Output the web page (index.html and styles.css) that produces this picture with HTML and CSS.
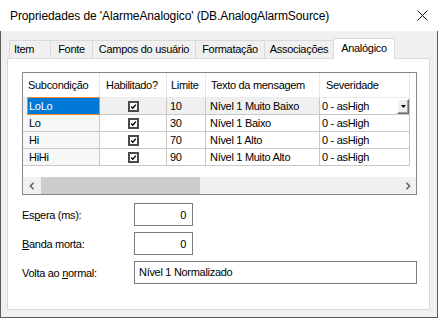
FILE: index.html
```html
<!DOCTYPE html>
<html lang="pt">
<head>
    <meta charset="UTF-8">
    <title>Propriedades de 'AlarmeAnalogico'</title>
    <link rel="stylesheet" href="styles.css">
</head>
<body>
    <div class="window">
        <div class="titlebar">
            <span class="title">Propriedades de 'AlarmeAnalogico' (DB.AnalogAlarmSource)</span>
            <svg class="close" width="11" height="11" viewBox="0 0 11 11"><path d="M0.5 0.5 L10.5 10.5 M10.5 0.5 L0.5 10.5" stroke="#111" stroke-width="1" fill="none"/></svg>
        </div>
        <div class="client">
            <div class="tabs">
                <div class="tab tab-item">Item</div>
                <div class="tab tab-fonte">Fonte</div>
                <div class="tab tab-campos">Campos do usuário</div>
                <div class="tab tab-format">Formatação</div>
                <div class="tab tab-assoc">Associações</div>
                <div class="tab tab-active">Analógico</div>
            </div>
            <div class="panel">
                <div class="grid">
                    <div class="rows">
                        <div class="row head">
                            <div class="cell c1">Subcondição</div>
                            <div class="cell c2">Habilitado?</div>
                            <div class="cell c3">Limite</div>
                            <div class="cell c4">Texto da mensagem</div>
                            <div class="cell c5">Severidade</div>
                            <div class="cell filler"></div>
                        </div>
                        <div class="row current">
                            <div class="cell c1 selcell"><div class="selbox">LoLo</div></div>
                            <div class="cell c2"><svg class="check" width="11" height="11" viewBox="0 0 11 11"><rect x="1" y="1" width="9" height="9" fill="#fff" stroke="#4a4a4a" stroke-width="2"/><path d="M3.2 5.6 L4.8 7.2 L7.9 3.6" stroke="#000" stroke-width="1.4" fill="none"/></svg></div>
                            <div class="cell c3">10</div>
                            <div class="cell c4">Nível 1 Muito Baixo</div>
                            <div class="cell c5 editing">
                                <span>0 - asHigh</span>
                                <span class="dropbtn"><svg width="5" height="3" viewBox="0 0 5 3"><path d="M0 0 H5 L2.5 3 Z" fill="#000"/></svg></span>
                            </div>
                            <div class="cell filler"></div>
                        </div>
                        <div class="row">
                            <div class="cell c1">Lo</div>
                            <div class="cell c2"><svg class="check" width="11" height="11" viewBox="0 0 11 11"><rect x="1" y="1" width="9" height="9" fill="#fff" stroke="#4a4a4a" stroke-width="2"/><path d="M3.2 5.6 L4.8 7.2 L7.9 3.6" stroke="#000" stroke-width="1.4" fill="none"/></svg></div>
                            <div class="cell c3">30</div>
                            <div class="cell c4">Nível 1 Baixo</div>
                            <div class="cell c5">0 - asHigh</div>
                            <div class="cell filler"></div>
                        </div>
                        <div class="row">
                            <div class="cell c1">Hi</div>
                            <div class="cell c2"><svg class="check" width="11" height="11" viewBox="0 0 11 11"><rect x="1" y="1" width="9" height="9" fill="#fff" stroke="#4a4a4a" stroke-width="2"/><path d="M3.2 5.6 L4.8 7.2 L7.9 3.6" stroke="#000" stroke-width="1.4" fill="none"/></svg></div>
                            <div class="cell c3">70</div>
                            <div class="cell c4">Nível 1 Alto</div>
                            <div class="cell c5">0 - asHigh</div>
                            <div class="cell filler"></div>
                        </div>
                        <div class="row">
                            <div class="cell c1">HiHi</div>
                            <div class="cell c2"><svg class="check" width="11" height="11" viewBox="0 0 11 11"><rect x="1" y="1" width="9" height="9" fill="#fff" stroke="#4a4a4a" stroke-width="2"/><path d="M3.2 5.6 L4.8 7.2 L7.9 3.6" stroke="#000" stroke-width="1.4" fill="none"/></svg></div>
                            <div class="cell c3">90</div>
                            <div class="cell c4">Nível 1 Muito Alto</div>
                            <div class="cell c5">0 - asHigh</div>
                            <div class="cell filler"></div>
                        </div>
                    </div>
                    <div class="hscroll">
                        <span class="arrow"><svg width="6" height="8" viewBox="0 0 6 8"><path d="M4.5 0.8 L1.5 4 L4.5 7.2" stroke="#606060" stroke-width="1.6" fill="none"/></svg></span>
                        <span class="thumb"></span>
                        <span class="arrow arrow-right"><svg width="6" height="8" viewBox="0 0 6 8"><path d="M1.5 0.8 L4.5 4 L1.5 7.2" stroke="#606060" stroke-width="1.6" fill="none"/></svg></span>
                    </div>
                </div>

                <div class="form">
                    <span class="lbl">Es<u>p</u>era (ms):</span>
                    <div class="box num">0</div>
                    <span class="lbl"><u>B</u>anda morta:</span>
                    <div class="box num">0</div>
                    <span class="lbl">Volta ao <u>n</u>ormal:</span>
                    <div class="box text">Nível 1 Normalizado</div>
                </div>
            </div>
        </div>
    </div>
</body>
</html>
```

FILE: styles.css
```css
* {
    box-sizing: border-box;
}
body {
    margin: 0;
    font-family: "Liberation Sans", Arial, sans-serif;
    font-size: 11px;
    letter-spacing: -0.3px;
    color: #000;
    background: #fff;
}
.window {
    width: 438px;
    height: 318px;
    display: flex;
    flex-direction: column;
    background: #f0f0f0;
}

/* title bar */
.titlebar {
    height: 31px;
    display: flex;
    align-items: center;
    padding-left: 10px;
    background: #fff;
    font-size: 12px;
    letter-spacing: -0.1px;
}
.title {
    flex: 1;
}
.close {
    margin-right: 10px;
}

/* dialog area */
.client {
    flex: 1;
    border: 1px solid #5a5a5a;
    border-top: none;
    padding: 7px 0 0 6px;
}
.tabs {
    display: flex;
    align-items: flex-end;
    height: 20px;
    padding-left: 2px;
}
.tab {
    height: 18px;
    line-height: 17px;
    text-align: center;
    border: 1px solid #d9d9d9;
    border-right: none;
    border-bottom: none;
    background: #f0f0f0;
    white-space: nowrap;
}
.tab-item { width: 41px; text-align: left; padding-left: 4px; }
.tab-fonte { width: 42px; }
.tab-campos { width: 103px; }
.tab-format { width: 69px; }
.tab-assoc { width: 69px; }
.tab-active {
    width: 62px;
    height: 21px;
    line-height: 19px;
    margin-bottom: -1px;
    border-right: 1px solid #d9d9d9;
    background: #fff;
    position: relative;
    z-index: 1;
}
.panel {
    width: 423px;
    height: 252px;
    border: 1px solid #d9d9d9;
    background: #fff;
    padding: 13px 0 0 14px;
}

/* grid */
.grid {
    width: 395px;
    height: 123px;
    border: 1px solid #888;
    display: flex;
    flex-direction: column;
}
.rows {
    flex: 1;
}
.row {
    display: flex;
    height: 17px;
}
.cell {
    display: flex;
    align-items: center;
    white-space: nowrap;
    overflow: hidden;
    border-right: 1px solid #c8c8c8;
    border-bottom: 1px solid #c8c8c8;
    padding-left: 3px;
}
.c1 { width: 77px; padding-left: 6px; background: #f7f7f7; }
.c2 { width: 67px; justify-content: center; padding-left: 0; }
.c3 { width: 39px; }
.c4 { width: 114px; padding-left: 4px; }
.c5 { width: 90px; padding-left: 2px; }
.cell.filler {
    flex: 1;
    border: none;
    background: #fff;
}
.row.head {
    height: 25px;
}
.head .cell {
    background: #fff;
    padding-left: 5px;
    justify-content: flex-start;
    border-right-color: #e8e8e8;
    border-bottom-color: #ececec;
}
.head .c2 { padding-left: 6px; }
.head .c3 { padding-left: 4px; }
.head .c5 { padding-left: 6px; }
.row.current .cell {
    background: #f0f0f0;
}
.row.current .cell.filler {
    background: #fff;
}
.row.current .selcell {
    border: none;
    padding-left: 4px;
    align-items: flex-start;
    overflow: visible;
}
.selbox {
    width: 73px;
    height: 18px;
    margin-top: -1px;
    padding-left: 1px;
    line-height: 16px;
    border: 1px solid #f08a24;
    background: #0078d7;
    color: #fff;
}
.row.current .editing {
    background: #fff;
    justify-content: space-between;
}
.dropbtn {
    width: 12px;
    height: 15px;
    display: flex;
    align-items: center;
    justify-content: center;
    background: #f0f0f0;
    border: 1px solid;
    border-color: #fff #6d6d6d #6d6d6d #fff;
    box-shadow: inset -1px -1px 0 #a0a0a0;
}

/* scrollbar */
.hscroll {
    height: 17px;
    display: flex;
    background: #f0f0f0;
}
.arrow {
    width: 17px;
    display: flex;
    align-items: center;
    justify-content: center;
}
.arrow-right {
    margin-left: auto;
}
.thumb {
    width: 159px;
    margin-left: 1px;
    background: #cdcdcd;
}

/* fields */
.form {
    margin-top: 8px;
    display: grid;
    grid-template-columns: 112px auto;
    row-gap: 6px;
    align-items: center;
}
.box {
    height: 23px;
    border: 1px solid #7a7a7a;
    display: flex;
    align-items: center;
    white-space: nowrap;
}
.num {
    width: 59px;
    justify-content: flex-end;
    padding-right: 6px;
}
.text {
    width: 283px;
    padding-left: 4px;
    align-items: flex-start;
    padding-top: 4px;
}
```
